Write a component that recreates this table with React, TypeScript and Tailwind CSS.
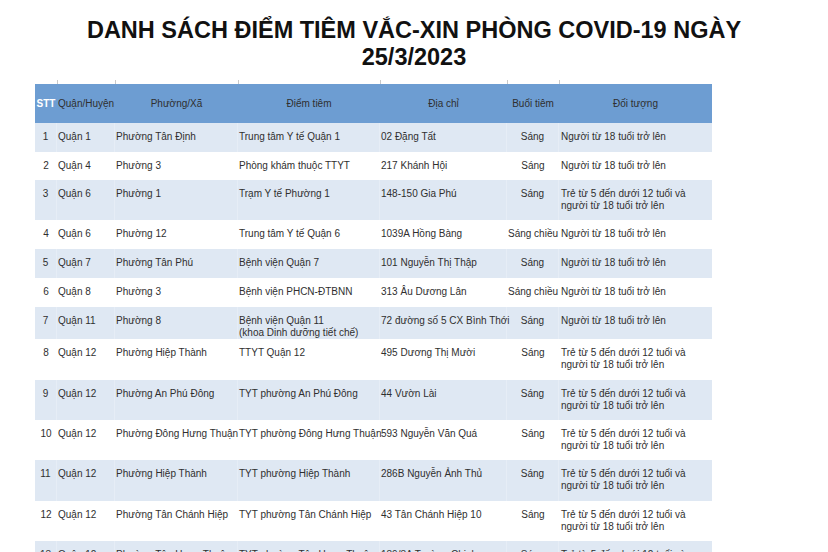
import React from 'react';

type Row = {
  stt: string;
  quan: string;
  phuong: string;
  diem: string[];
  diaChi: string;
  buoi: string;
  doiTuong: string[];
  h: string;
};

const NGUOI_LON = ['Người từ 18 tuổi trở lên'];
const TRE_EM = ['Trẻ từ 5 đến dưới 12 tuổi và', 'người từ 18 tuổi trở lên'];

const rows: Row[] = [
  { stt: '1', quan: 'Quận 1', phuong: 'Phường Tân Định', diem: ['Trung tâm Y tế Quận 1'], diaChi: '02 Đặng Tất', buoi: 'Sáng', doiTuong: NGUOI_LON, h: 'h-[29px]' },
  { stt: '2', quan: 'Quận 4', phuong: 'Phường 3', diem: ['Phòng khám thuộc TTYT'], diaChi: '217 Khánh Hội', buoi: 'Sáng', doiTuong: NGUOI_LON, h: 'h-[28px]' },
  { stt: '3', quan: 'Quận 6', phuong: 'Phường 1', diem: ['Trạm Y tế Phường 1'], diaChi: '148-150 Gia Phú', buoi: 'Sáng', doiTuong: TRE_EM, h: 'h-[40px]' },
  { stt: '4', quan: 'Quận 6', phuong: 'Phường 12', diem: ['Trung tâm Y tế Quận 6'], diaChi: '1039A Hồng Bàng', buoi: 'Sáng chiều', doiTuong: NGUOI_LON, h: 'h-[29px]' },
  { stt: '5', quan: 'Quận 7', phuong: 'Phường Tân Phú', diem: ['Bệnh viện Quận 7'], diaChi: '101 Nguyễn Thị Thập', buoi: 'Sáng', doiTuong: NGUOI_LON, h: 'h-[29px]' },
  { stt: '6', quan: 'Quận 8', phuong: 'Phường 3', diem: ['Bệnh viện PHCN-ĐTBNN'], diaChi: '313 Âu Dương Lân', buoi: 'Sáng chiều', doiTuong: NGUOI_LON, h: 'h-[29px]' },
  { stt: '7', quan: 'Quận 11', phuong: 'Phường 8', diem: ['Bệnh viện Quận 11', '(khoa Dinh dưỡng tiết chế)'], diaChi: '72 đường số 5 CX Bình Thới', buoi: 'Sáng', doiTuong: NGUOI_LON, h: 'h-[32px]' },
  { stt: '8', quan: 'Quận 12', phuong: 'Phường Hiệp Thành', diem: ['TTYT Quận 12'], diaChi: '495 Dương Thị Mười', buoi: 'Sáng', doiTuong: TRE_EM, h: 'h-[41px]' },
  { stt: '9', quan: 'Quận 12', phuong: 'Phường An Phú Đông', diem: ['TYT phường An Phú Đông'], diaChi: '44 Vườn Lài', buoi: 'Sáng', doiTuong: TRE_EM, h: 'h-[40px]' },
  { stt: '10', quan: 'Quận 12', phuong: 'Phường Đông Hưng Thuận', diem: ['TYT phường Đông Hưng Thuận'], diaChi: '593 Nguyễn Văn Quá', buoi: 'Sáng', doiTuong: TRE_EM, h: 'h-[40px]' },
  { stt: '11', quan: 'Quận 12', phuong: 'Phường Hiệp Thành', diem: ['TYT phường Hiệp Thành'], diaChi: '286B Nguyễn Ảnh Thủ', buoi: 'Sáng', doiTuong: TRE_EM, h: 'h-[41px]' },
  { stt: '12', quan: 'Quận 12', phuong: 'Phường Tân Chánh Hiệp', diem: ['TYT phường Tân Chánh Hiệp'], diaChi: '43 Tân Chánh Hiệp 10', buoi: 'Sáng', doiTuong: TRE_EM, h: 'h-[40px]' },
  { stt: '13', quan: 'Quận 12', phuong: 'Phường Tân Hưng Thuận', diem: ['TYT phường Tân Hưng Thuận'], diaChi: '189/3A Trường Chinh', buoi: 'Sáng', doiTuong: TRE_EM, h: 'h-[40px]' },
];

const GRID = 'grid grid-cols-[22px_58px_123px_142px_127px_52px_153px]';

function Lines({ items }: { items: string[] }) {
  return (
    <>
      {items.map((t, i) => (
        <div key={i} className="whitespace-nowrap">{t}</div>
      ))}
    </>
  );
}

export default function App() {
  return (
    <div className="min-h-screen bg-white font-['Liberation_Sans',Arial,sans-serif] text-[#2f2f2f]">
      <h1 className="pt-[17px] text-center text-[23.5px] font-bold leading-[27px] text-[#111]">
        DANH SÁCH ĐIỂM TIÊM VẮC-XIN PHÒNG COVID-19 NGÀY
        <br />
        25/3/2023
      </h1>

      <div className="ml-[35px] mt-[9px] w-[677px]">
        {/* stubs of the column lines above the header */}
        <div className={`${GRID} h-[4px]`}>
          {Array.from({ length: 7 }).map((_, i) => (
            <div key={i} className={i === 0 ? '' : 'border-l border-[#c9c9c9]'} />
          ))}
        </div>

        <div className={`${GRID} h-[39px] items-center bg-[#6d9dd2] text-[10px] leading-[12px]`}>
          <div className="text-center font-bold text-white">STT</div>
          <div className="pl-px">Quận/Huyện</div>
          <div className="text-center">Phường/Xã</div>
          <div className="text-center">Điểm tiêm</div>
          <div className="text-center">Địa chỉ</div>
          <div className="text-center">Buổi tiêm</div>
          <div className="text-center">Đối tượng</div>
        </div>

        {rows.map((r, i) => {
          const stripe = i % 2 === 0;
          const cell = `pt-[8px] ${stripe ? 'border-r border-[#e6edf6]' : ''}`;
          return (
            <div
              key={r.stt}
              className={`${GRID} ${r.h} text-[10px] leading-[11.5px] ${stripe ? 'bg-[#dfe8f3]' : 'bg-white'}`}
            >
              <div className={`${cell} text-center`}>{r.stt}</div>
              <div className={`${cell} pl-px`}>{r.quan}</div>
              <div className={`${cell} pl-px whitespace-nowrap`}>{r.phuong}</div>
              <div className={`${cell} pl-px`}>
                <Lines items={r.diem} />
              </div>
              <div className={`${cell} pl-px whitespace-nowrap`}>{r.diaChi}</div>
              <div className={`${cell} text-center whitespace-nowrap`}>{r.buoi}</div>
              <div className="pt-[8px] pl-[2px]">
                <Lines items={r.doiTuong} />
              </div>
            </div>
          );
        })}
      </div>
    </div>
  );
}
